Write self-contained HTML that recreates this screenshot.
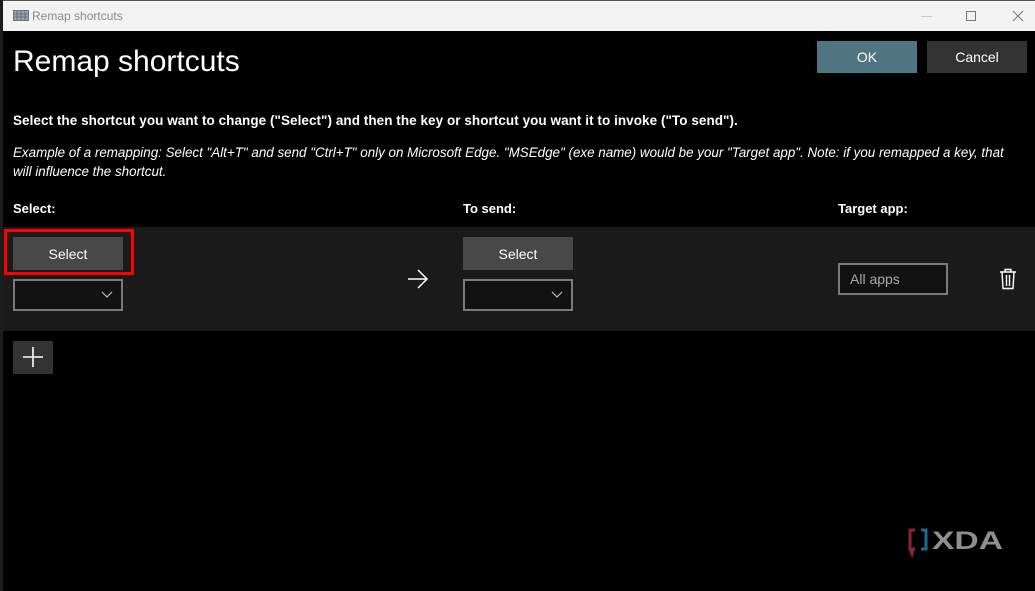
<!DOCTYPE html>
<html><head><meta charset="utf-8"><style>
*{margin:0;padding:0;box-sizing:border-box}
body{width:1035px;height:591px;background:#000;position:relative;overflow:hidden;font-family:"Liberation Sans",sans-serif;color:#fff}
.abs{position:absolute}
.tb{left:3px;top:0;width:1032px;height:31px;background:#f3f3f3;border-top:1px solid #555}
.outl{left:0;top:0;width:3px;height:591px;background:#1c1c1c}
.btn{position:absolute;display:flex;align-items:center;justify-content:center;font-size:14px}
.dd{position:absolute;background:#111;border:2px solid #7a7a7a}
</style></head><body>
<div class="abs outl"></div>
<div class="abs tb">
  <svg class="abs" style="left:10px;top:9px" width="16" height="11" viewBox="0 0 16 11"><rect x="0.5" y="0.5" width="15" height="10" fill="#9aa4b0" stroke="#6b7683"/><path d="M1 4H15M1 7H15M4 1V10M8 1V10M12 1V10" stroke="#5d6772" stroke-width="0.8"/></svg>
  <div class="abs" style="left:29px;top:8px;font-size:12px;color:#8a8a8a">Remap shortcuts</div>
  <div class="abs" style="left:918px;top:15px;width:11px;height:1px;background:#ccc"></div>
  <div class="abs" style="left:963px;top:10px;width:10px;height:10px;border:1px solid #777"></div>
  <svg class="abs" style="left:1009px;top:9px" width="12" height="12"><path d="M1 1L11 11M11 1L1 11" stroke="#777" stroke-width="1"/></svg>
</div>
<div class="abs" style="left:13px;top:45px;font-size:30px;color:#fff">Remap shortcuts</div>
<div class="btn" style="left:817px;top:41px;width:100px;height:32px;background:#4f7580">OK</div>
<div class="btn" style="left:927px;top:41px;width:100px;height:32px;background:#333">Cancel</div>
<div class="abs" style="left:13px;top:113px;font-size:13.5px;font-weight:bold;letter-spacing:0.05px;white-space:nowrap">Select the shortcut you want to change ("Select") and then the key or shortcut you want it to invoke ("To send").</div>
<div class="abs" style="left:13px;top:143px;width:1015px;font-size:13.4px;font-style:italic;line-height:19px">Example of a remapping: Select "Alt+T" and send "Ctrl+T" only on Microsoft Edge. "MSEdge" (exe name) would be your "Target app". Note: if you remapped a key, that<br>will influence the shortcut.</div>
<div class="abs" style="left:13px;top:201px;font-size:13px;font-weight:bold">Select:</div>
<div class="abs" style="left:463px;top:201px;font-size:13px;font-weight:bold">To send:</div>
<div class="abs" style="left:838px;top:201px;font-size:13px;font-weight:bold">Target app:</div>
<div class="abs" style="left:3px;top:227px;width:1032px;height:104px;background:#1a1a1a"></div>
<div class="btn" style="left:13px;top:237px;width:110px;height:33px;background:#484848">Select</div>
<div class="abs" style="left:4px;top:229px;width:130px;height:46px;border:3px solid #f00"></div>
<div class="dd" style="left:13px;top:279px;width:110px;height:32px"><svg class="abs" style="left:86px;top:10px" width="12" height="8"><path d="M1 1L6 6L11 1" fill="none" stroke="#bbb" stroke-width="1.2"/></svg></div>
<svg class="abs" style="left:407px;top:269px" width="22" height="20"><path d="M1 10H20M11 1L20 10L11 19" fill="none" stroke="#fff" stroke-width="1.5"/></svg>
<div class="btn" style="left:463px;top:237px;width:110px;height:33px;background:#484848">Select</div>
<div class="dd" style="left:463px;top:279px;width:110px;height:32px"><svg class="abs" style="left:86px;top:10px" width="12" height="8"><path d="M1 1L6 6L11 1" fill="none" stroke="#bbb" stroke-width="1.2"/></svg></div>
<div class="dd" style="left:838px;top:263px;width:110px;height:32px"><div class="abs" style="left:10px;top:6px;font-size:14px;color:#aaa">All apps</div></div>
<svg class="abs" style="left:999px;top:268px" width="18" height="22" viewBox="0 0 18 22"><path d="M1 4H17M6 4V1.5H12V4M3 4L4 20.5H14L15 4" fill="none" stroke="#fff" stroke-width="1.4"/><path d="M7.5 7V18M10.5 7V18" stroke="#fff" stroke-width="1.4"/></svg>
<div class="abs" style="left:13px;top:341px;width:40px;height:33px;background:#333"></div>
<svg class="abs" style="left:22px;top:346px" width="22" height="22"><path d="M11 1V21M1 11H21" stroke="#fff" stroke-width="1.6"/></svg>
<svg class="abs" style="left:906px;top:527px" width="110" height="30">
  <path d="M9 3H4V22L6 27L7 22H9" fill="none" stroke="#8a2434" stroke-width="3"/>
  <path d="M15 3H20V22H15" fill="none" stroke="#1f6a9a" stroke-width="3"/>
  <text x="26" y="22" font-family="Liberation Sans" font-weight="bold" font-size="25" fill="#8f8f8f" textLength="71" lengthAdjust="spacingAndGlyphs">XDA</text>
</svg>
</body></html>
